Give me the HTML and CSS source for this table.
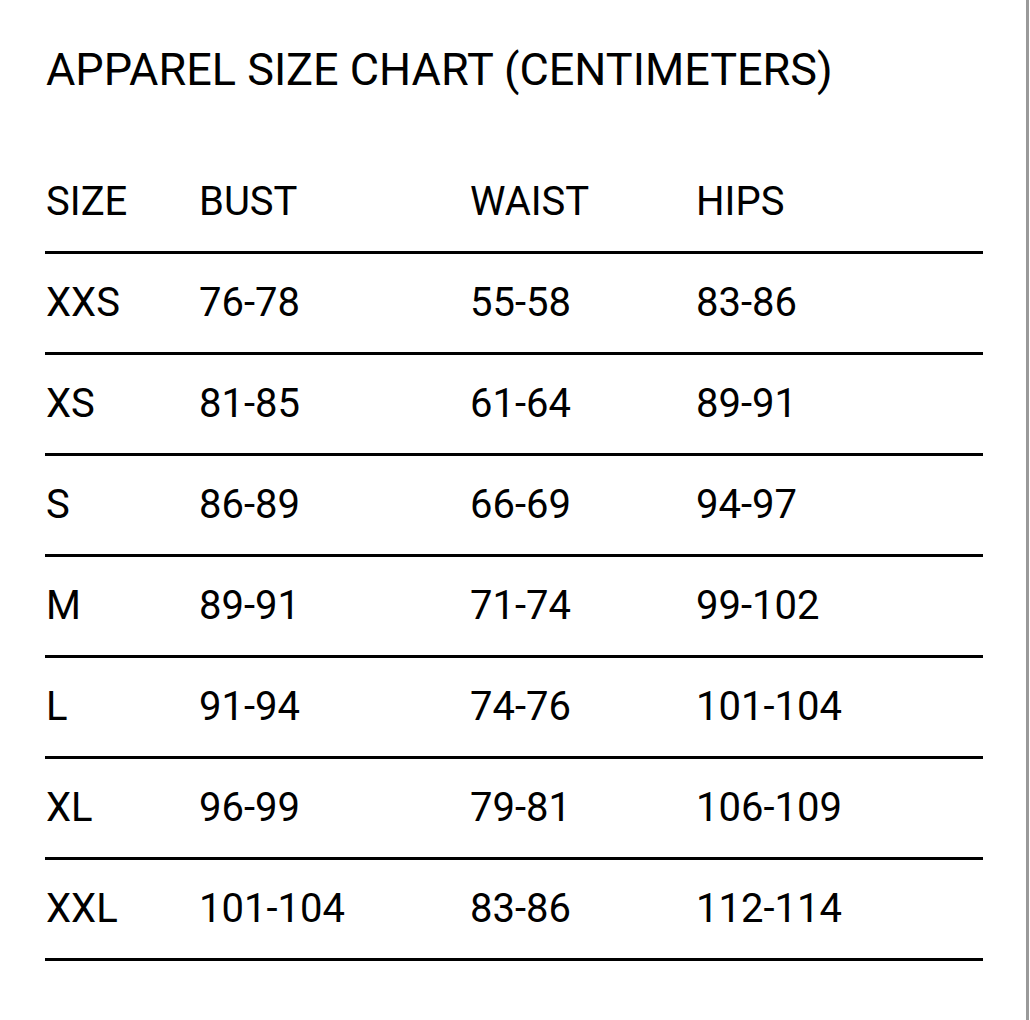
FILE: index.html
```html
<!DOCTYPE html>
<html lang="en">
<head>
<meta charset="utf-8">
<title>Apparel Size Chart</title>
<link rel="stylesheet" href="styles.css">
</head>
<body>
<div class="page">
  <h1 class="title">APPAREL SIZE CHART (CENTIMETERS)</h1>
  <div class="chart">
    <div class="row head">
      <div>SIZE</div><div>BUST</div><div>WAIST</div><div>HIPS</div>
    </div>
    <div class="row"><div>XXS</div><div>76-78</div><div>55-58</div><div>83-86</div></div>
    <div class="row"><div>XS</div><div>81-85</div><div>61-64</div><div>89-91</div></div>
    <div class="row"><div>S</div><div>86-89</div><div>66-69</div><div>94-97</div></div>
    <div class="row"><div>M</div><div>89-91</div><div>71-74</div><div>99-102</div></div>
    <div class="row"><div>L</div><div>91-94</div><div>74-76</div><div>101-104</div></div>
    <div class="row"><div>XL</div><div>96-99</div><div>79-81</div><div>106-109</div></div>
    <div class="row"><div>XXL</div><div>101-104</div><div>83-86</div><div>112-114</div></div>
  </div>
</div>
</body>
</html>
```

FILE: styles.css
```css
html, body {
  margin: 0;
  padding: 0;
  background: #fff;
}
body {
  font-family: Roboto, "Liberation Sans", Arial, sans-serif;
  color: #000;
}
.page {
  width: 1026px;
  min-height: 1020px;
  border-right: 3px solid #9a9a9a;
  box-sizing: content-box;
  padding-top: 43px;
}
.title {
  margin: 0 0 0 46px;
  font-size: 45px;
  font-weight: 400;
  line-height: 54px;
}
.chart {
  margin-left: 45px;
  width: 938px;
  margin-top: 85px;
}
.row {
  display: grid;
  grid-template-columns: 153px 271px 226px 1fr;
  align-items: center;
  font-size: 40px;
  line-height: 40px;
  height: 101px;
  box-sizing: border-box;
  border-bottom: 3px solid #000;
  padding-left: 1px;
}
.row.head {
  height: auto;
  padding-bottom: 29px;
}
```
